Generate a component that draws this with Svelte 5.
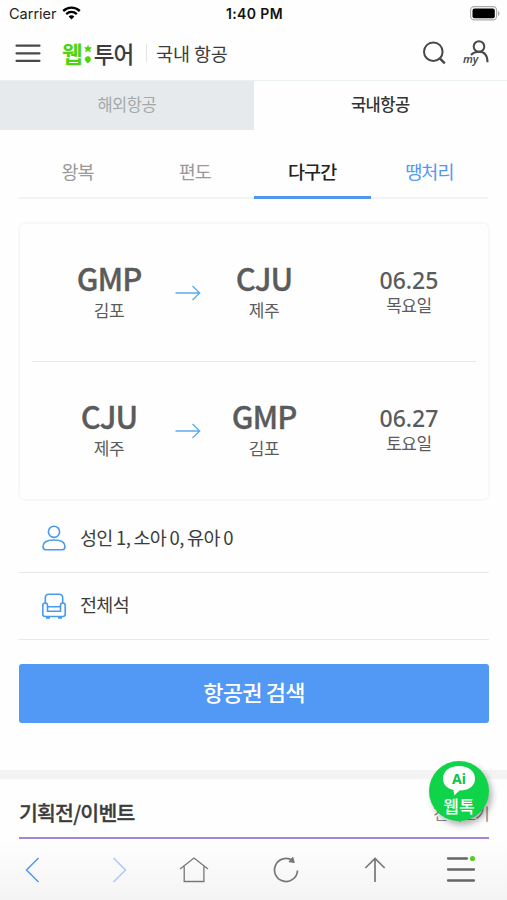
<script>
  const tripTypes = ['왕복', '편도', '다구간', '땡처리'];
  let tripType = $state('다구간');

  const segments = [
    { from: 'GMP', fromCity: '김포', to: 'CJU', toCity: '제주', date: '06.25', day: '목요일' },
    { from: 'CJU', fromCity: '제주', to: 'GMP', toCity: '김포', date: '06.27', day: '토요일' }
  ];
</script>

<div class="screen">
  <div class="status">
    <div class="carrier">
      <span>Carrier</span>
      <svg width="19" height="14" viewBox="0 0 19 14">
        <path d="M1.2 5C6 .5 13 .5 17.800 5" fill="none" stroke="#000" stroke-width="2.4" />
        <path d="M4.200 8.100c3.200-2.900 7.400-2.900 10.600 0" fill="none" stroke="#000" stroke-width="2.300" />
        <path d="M6.600 10.400c1.800-1.500 4-1.500 5.800 0L9.500 13.500z" />
      </svg>
    </div>
    <strong>1:40 PM</strong>
    <svg class="battery" width="30" height="15" viewBox="0 0 30 15">
      <rect x=".6" y=".6" width="26" height="13.300" rx="3.600" fill="#fff" stroke="#aaa" stroke-width="1.100" />
      <rect x="2.500" y="2.400" width="22.300" height="9.800" rx="2" />
      <path d="M28 5c2 1 2 4 0 5z" fill="#aaa" />
    </svg>
  </div>

  <header>
    <button class="menu" aria-label="메뉴">
      <svg width="26" height="20" viewBox="0 0 26 20">
        <path d="M1.500 1.700h23M1.500 9.300h23M1.500 16.800h23" stroke="#484848" stroke-width="2.200" stroke-linecap="round" />
      </svg>
    </button>
    <div class="logo">
      <span class="green">웹</span>
      <svg width="8" height="20" viewBox="0 0 8 20">
        <path d="M4 .5l1 2 2.400.1-1.600 1.800.7 2.300L4 5.600 1.500 6.700l.7-2.300L.6 2.600 3 2.500z" fill="#4bd50c" stroke="#4bd50c" stroke-width=".6" />
        <path d="M4 11.500c3.600 0 3.600 5.500-.8 6.500l-.5-1.200c-2.600-1.400-1.900-5.300 1.300-5.300z" fill="#4bd50c" stroke="#4bd50c" stroke-width=".6" />
      </svg>
      <span>투어</span>
    </div>
    <h1>국내 항공</h1>
    <div class="actions">
      <svg width="26" height="26" viewBox="0 0 26 26" fill="none" stroke="#484848" stroke-width="2">
        <circle cx="11.300" cy="10.700" r="9.300" />
        <path d="M17.800 17.300l5 5" stroke-width="2.400" />
      </svg>
      <svg width="28" height="28" viewBox="0 0 28 28">
        <g fill="none" stroke="#484848" stroke-width="2">
          <circle cx="16" cy="6.500" r="5.300" />
          <path d="M8 15c2-2.300 5-3.300 8-3.300 5.500 0 8.500 3.800 8.500 10.500" />
        </g>
        <text class="my" x="0" y="22.500">my</text>
      </svg>
    </div>
  </header>

  <nav class="region">
    <button>해외항공</button>
    <button class="active">국내항공</button>
  </nav>

  <nav class="trips">
    {#each tripTypes as type}
      <button
        class:active={tripType === type}
        class:sale={type === '땡처리'}
        onclick={() => (tripType = type)}
      >{type}</button>
    {/each}
  </nav>

  <section class="card">
    {#each segments as seg}
      <div class="segment">
        <div class="place">
          <b>{seg.from}</b>
          <span>{seg.fromCity}</span>
        </div>
        <svg class="arrow" width="26" height="16" viewBox="0 0 26 16" fill="none" stroke="#5da9f0" stroke-width="1.300">
          <path d="M.5 8h24M17.500 1l7.200 7-7.200 7" />
        </svg>
        <div class="place">
          <b>{seg.to}</b>
          <span>{seg.toCity}</span>
        </div>
        <div class="date">
          <b>{seg.date}</b>
          <span>{seg.day}</span>
        </div>
      </div>
    {/each}
  </section>

  <div class="option people">
    <svg width="26" height="26" viewBox="0 0 26 26" fill="none" stroke="#499be9" stroke-width="1.600">
      <circle cx="13" cy="6.800" r="5.600" />
      <path d="M2 21.500c0-4.500 3-6.500 11-6.500s11 2 11 6.500c0 2.500-.8 3.200-2.500 3.200h-17C2.800 24.700 2 24 2 21.500z" />
    </svg>
    <span>성인 1, 소아 0, 유아 0</span>
  </div>
  <div class="option seat">
    <svg width="26" height="26" viewBox="0 0 26 26" fill="none" stroke="#499be9" stroke-width="1.600">
      <path d="M4.300 10V5c0-2.500 1-3.700 3.500-3.700h10.400c2.500 0 3.500 1.200 3.500 3.700v5M6.500 13.800h13" />
      <path d="M6.500 12.500c0-3.300-4.700-3.300-4.700 0v8.800c0 1.400.8 2.200 2.200 2.200h18c1.400 0 2.200-.8 2.200-2.200v-8.800c0-3.300-4.700-3.300-4.700 0v5.800h-13z" />
      <path d="M5 24.800h4M17 24.800h4" stroke-width="2" />
    </svg>
    <span>전체석</span>
  </div>

  <button class="search">항공권 검색</button>

  <section class="events">
    <div class="events-head">
      <h2>기획전/이벤트</h2>
      <span>전체보기</span>
    </div>
  </section>

  <footer>
    <svg width="30" height="30" viewBox="0 0 30 30" stroke="#5097f2"><path d="M20.500 3L8.500 15l12 12" /></svg>
    <svg width="30" height="30" viewBox="0 0 30 30" stroke="#a9cbf8"><path d="M9.500 3l12 12-12 12" /></svg>
    <svg width="30" height="30" viewBox="0 0 30 30"><path d="M1 14L15 3l14 11M5.200 11.500V26.500h19.700V11.500" stroke-width="1.300" /></svg>
    <svg width="30" height="30" viewBox="0 0 30 30">
      <path d="M26.500 15.500A11.500 11.500 0 1 1 21.500 5.500" stroke-width="1.700" />
      <path d="M21.800 2.300l1.500 5.200-5.300-.8z" fill="#777" stroke-width="1" />
    </svg>
    <svg width="30" height="30" viewBox="0 0 30 30"><path d="M15 27V3.500M5.300 13L15 3.500 24.700 13" stroke-width="1.700" /></svg>
    <svg width="30" height="30" viewBox="0 0 30 30">
      <path d="M2 3.500h19M2 14.500h26M2 25.500h26" stroke="#666" stroke-width="2.300" stroke-linecap="round" />
      <circle cx="26.500" cy="3.500" r="2.600" fill="#58ce1d" stroke="none" />
    </svg>
  </footer>

  <button class="talk">
    <svg width="36" height="32" viewBox="0 0 36 32">
      <path d="M18 1C8.500 1 2 6 2 13.500c0 6 4 10 10.500 11.500l.7 5.500 5.300-5C28 25.500 34 21 34 13.500 34 6 27.500 1 18 1z" fill="#fff" />
      <text x="18" y="18.500" text-anchor="middle">Ai</text>
    </svg>
    <span>웹톡</span>
  </button>
</div>

<style>
  :global(body) {
    background: #fff;
  }

  .screen {
    position: relative;
    width: 507px;
    height: 900px;
    overflow: hidden;
    background: #fefefe;
    color: #3c3c3c;
    font-family: "Noto Sans CJK KR", sans-serif;
  }

  button {
    padding: 0;
    border: 0;
    background: none;
    color: inherit;
    font: inherit;
    cursor: pointer;
  }

  svg {
    display: block;
    flex: none;
  }

  .status {
    display: grid;
    grid-template-columns: 1fr 1fr 1fr;
    align-items: center;
    height: 28px;
    padding: 0 7px 0 9px;
    font: 400 14.5px/28px Inter, sans-serif;
    color: #222;
  }

  .carrier {
    display: flex;
    align-items: center;
    gap: 5px;
  }

  .carrier svg {
    margin-top: -2px;
  }

  .status strong {
    color: #111;
    font-size: 14px;
    font-weight: 600;
    text-align: center;
    letter-spacing: 0.4px;
  }

  .battery {
    justify-self: end;
    margin-top: -2px;
  }

  header {
    display: flex;
    align-items: center;
    height: 52px;
    padding: 0 16px 0 15px;
    border-bottom: 1px solid #eaeff1;
  }

  .menu {
    margin-right: 21px;
  }

  .logo {
    display: flex;
    align-items: center;
    gap: 2px;
    width: 73px;
    height: 28px;
    padding-bottom: 2px;
    font-size: 22.5px;
    font-weight: 500;
    line-height: 28px;
    letter-spacing: -1px;
    white-space: nowrap;
  }

  .logo .green {
    color: #4bd50c;
    font-weight: 700;
  }

  .logo svg {
    margin-top: 3px;
  }

  h1 {
    margin: -2px 0 0 11px;
    padding-left: 9px;
    border-left: 1px solid #e4e4e4;
    font-size: 18.5px;
    font-weight: 400;
    line-height: 18px;
    letter-spacing: -0.1px;
  }

  .actions {
    display: flex;
    align-items: center;
    gap: 15px;
    margin-left: auto;
  }

  .my {
    font: italic 600 11px "Noto Sans", sans-serif;
    fill: #484848;
    stroke: #fff;
    stroke-width: 2px;
    paint-order: stroke;
  }

  .region {
    display: flex;
    height: 49px;
  }

  .region button {
    flex: 1;
    padding-bottom: 3px;
    background: #e6eaed;
    color: #a5a8aa;
    font-size: 16.5px;
    letter-spacing: -0.5px;
  }

  .region .active {
    background: #fefefe;
    color: #333;
    font-weight: 500;
  }

  .trips {
    display: flex;
    height: 69px;
    margin: 0 19px;
  }

  .trips button {
    flex: 1;
    padding-top: 15px;
    border-bottom: 2px solid #f1f3f4;
    color: #999;
    font-size: 18.5px;
    letter-spacing: -0.9px;
  }

  .trips .sale {
    color: #5298f3;
  }

  .trips .active {
    border-bottom: 3px solid #5196ee;
    color: #222;
    font-weight: 500;
  }

  .card {
    height: 275px;
    margin: 23px 17px 0 18px;
    padding: 0 12px;
    border: 2px solid #f8f8f8;
    border-radius: 7px;
  }

  .segment {
    display: grid;
    grid-template-columns: 154px 26px 104px 1fr;
    align-items: start;
    height: 137px;
  }

  .segment + .segment {
    height: 136px;
    border-top: 1px solid #e8e8e8;
  }

  .place,
  .date {
    display: flex;
    flex-direction: column;
    align-items: center;
    color: #5b5b5b;
  }

  .date {
    padding-left: 26px;
  }

  .place b {
    margin-top: 35px;
    font-size: 31px;
    font-weight: 500;
    line-height: 38px;
    letter-spacing: -1px;
    -webkit-text-stroke: 0.3px #5b5b5b;
  }

  .place span {
    margin-top: 1px;
  }

  .place span,
  .date span {
    font-size: 17px;
    line-height: 24px;
    letter-spacing: -0.4px;
  }

  .arrow {
    margin-left: -11px;
    margin-top: 61px;
  }

  .date b {
    margin-top: 44px;
    font: 500 23px/25px "Noto Sans", sans-serif;
  }

  .option {
    display: flex;
    align-items: center;
    gap: 13px;
    height: 66px;
    margin: 0 18px 0 19px;
    padding-left: 22px;
    border-bottom: 1px solid #e9e9e9;
    font-size: 18.5px;
    letter-spacing: -0.7px;
  }

  .people {
    height: 71px;
  }

  .people svg {
    margin-top: 2px;
  }

  .option span {
    line-height: 28px;
  }

  .seat span {
    padding-bottom: 4px;
  }

  .search {
    display: block;
    width: 470px;
    height: 59px;
    margin: 24px 0 0 19px;
    padding-bottom: 5px;
    border-radius: 3px;
    background: #5298f5;
    color: #fff;
    font-size: 22px;
    font-weight: 500;
    letter-spacing: -0.8px;
  }

  .events {
    margin-top: 47px;
    border-top: 9px solid #f3f3f3;
  }

  .events-head {
    display: flex;
    align-items: center;
    justify-content: space-between;
    height: 58px;
    margin: 0 18px 0 19px;
    border-bottom: 2px solid #a583d5;
  }

  .events-head span {
    padding-top: 10px;
    color: #888;
    font-size: 16px;
    letter-spacing: -0.8px;
  }

  h2 {
    margin: 7px 0 0;
    font-size: 20.5px;
    font-weight: 500;
    letter-spacing: -0.8px;
    -webkit-text-stroke: 0.3px #3c3c3c;
  }

  footer {
    display: grid;
    grid-template-columns: 86px 75px 92px 89px 86px 30px;
    align-items: center;
    height: 61px;
    padding-left: 18px;
    background: linear-gradient(#fefefe, #f4f4f4);
  }

  footer svg {
    fill: none;
    stroke-width: 1.5;
  }

  footer svg:nth-child(n + 3) {
    stroke: #777;
  }

  .talk {
    position: absolute;
    right: 18px;
    bottom: 79px;
    display: flex;
    flex-direction: column;
    align-items: center;
    width: 60px;
    height: 60px;
    border-radius: 50%;
    background: #0fd348;
    box-shadow: 3px 4px 6px rgba(0, 0, 0, 0.3);
    color: #fff;
  }

  .talk svg {
    margin-top: 4px;
  }

  .talk text {
    fill: #0fc344;
    font: 700 14px "Noto Sans", sans-serif;
  }

  .talk span {
    font-size: 17px;
    font-weight: 500;
    line-height: 18px;
  }
</style>
